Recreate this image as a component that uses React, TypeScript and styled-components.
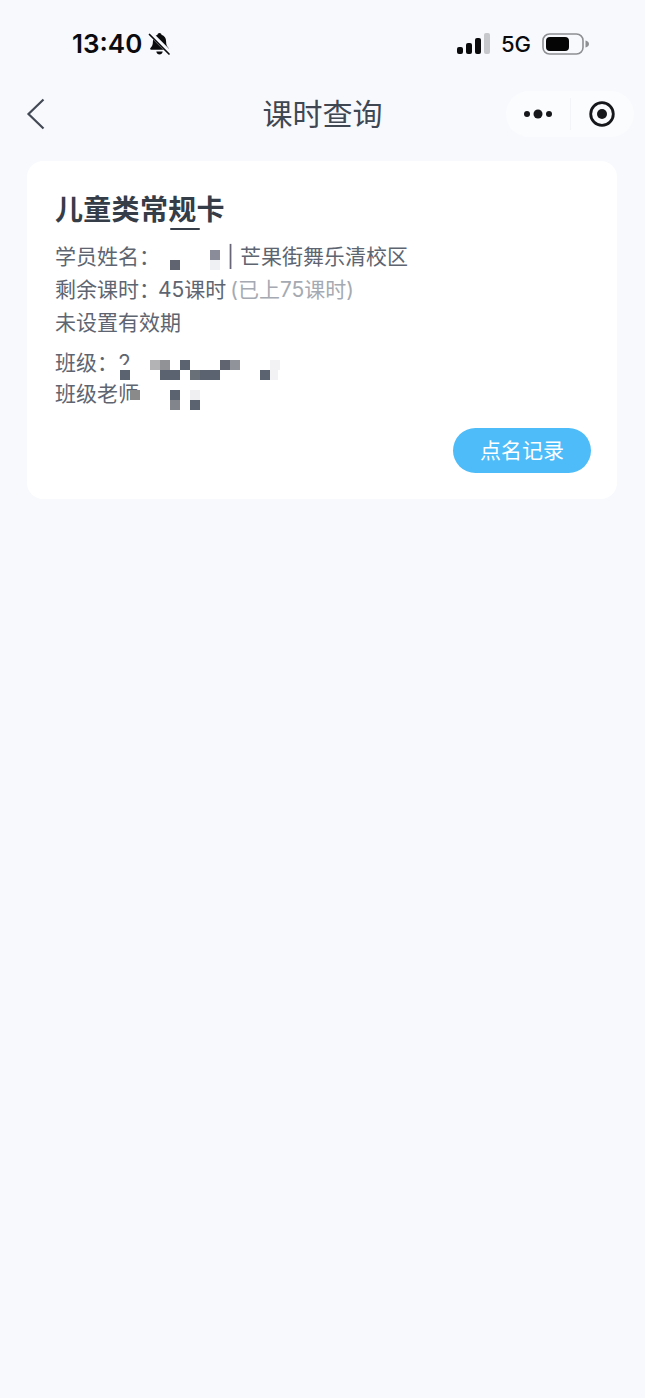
import React from 'react'
import styled, { createGlobalStyle } from 'styled-components'

const GlobalStyle = createGlobalStyle`
  html, body {
    margin: 0;
    padding: 0;
    background: #f7f9fd;
  }
  body {
    font-family: "Inter", "Noto Sans CJK SC", sans-serif;
  }
`

// mosaic squares that cover the private names, [x, y, w, h, colour] relative to the card
const MOSAIC: [number, number, number, number, string][] = [
  [143, 99, 10, 10, '#5f6470'],
  [183, 89, 10, 10, '#8a8d99'],
  [183, 99, 10, 10, '#eff0f3'],
  [123, 199, 10, 10, '#b3b3b5'],
  [133, 199, 10, 10, '#909296'],
  [153, 199, 10, 10, '#5b6270'],
  [193, 199, 10, 10, '#5f6470'],
  [203, 199, 10, 10, '#90949a'],
  [243, 199, 10, 10, '#f2f2f5'],
  [88, 204, 16, 16, '#ffffff'],
  [93, 209, 10, 10, '#5b6270'],
  [133, 209, 20, 10, '#5b6270'],
  [163, 209, 10, 10, '#6a7078'],
  [173, 209, 20, 10, '#5b6270'],
  [233, 209, 10, 10, '#5b6270'],
  [243, 209, 8, 10, '#f2f2f5'],
  [103, 229, 10, 10, '#8a8a8a'],
  [103, 239, 12, 8, '#ffffff'],
  [143, 229, 10, 10, '#5b6270'],
  [163, 229, 10, 10, '#efeff2'],
  [143, 239, 10, 10, '#82868c'],
  [163, 239, 10, 10, '#5b6270'],
]

const Page = styled.div`
  min-height: 1398px;
  background: #f7f9fd;
  overflow: hidden;
`

const StatusBar = styled.div`
  display: flex;
  align-items: center;
  justify-content: space-between;
  height: 88px;
  padding: 0 56px 0 72px;
  color: #0b0b0d;
`

const StatusGroup = styled.div<{ $gap: number }>`
  display: flex;
  align-items: center;
  gap: ${p => p.$gap}px;
`

const Time = styled.span`
  font-size: 26px;
  font-weight: 600;
  line-height: 1;
`

const Network = styled.span`
  font-family: "Inter", sans-serif;
  font-size: 22px;
  font-weight: 500;
  line-height: 1;
`

const NavBar = styled.div`
  display: grid;
  grid-template-columns: minmax(0, 1fr) auto minmax(0, 1fr);
  align-items: center;
  height: 52px;
  padding: 0 11px;
  margin-bottom: 21px;
`

const BackButton = styled.div`
  display: flex;
  align-items: center;
  height: 32px;
  padding-left: 15px;
`

const Title = styled.h1`
  margin: 0;
  font-size: 30px;
  font-weight: 400;
  line-height: 1;
  color: #3f4752;
`

const Capsule = styled.div`
  justify-self: end;
  display: flex;
  align-items: center;
  flex: none;
  width: 128px;
  height: 46px;
  border-radius: 23px;
  background: #fbfcfe;
`

const CapsulePart = styled.div`
  flex: 1;
  display: flex;
  align-items: center;
  justify-content: center;
`

const CapsuleDivider = styled.div`
  width: 1px;
  height: 32px;
  background: #f3f4f7;
`

const Card = styled.section`
  position: relative;
  display: flex;
  flex-direction: column;
  box-sizing: border-box;
  width: 590px;
  height: 338px;
  margin-left: 27px;
  padding: 30px 26px 26px 28px;
  border-radius: 16px;
  background: #ffffff;
`

const CardTitle = styled.h2`
  margin: 0 0 11px;
  font-size: 28px;
  font-weight: 700;
  line-height: 38px;
  letter-spacing: 0.3px;
  color: #353d48;
`

const InfoLine = styled.div`
  font-size: 21px;
  line-height: 33px;
  white-space: nowrap;
  color: #5e6571;
`

const ClassBlock = styled.div`
  margin-top: 8px;

  ${InfoLine} {
    line-height: 31px;
  }
`

const NameGap = styled.span`
  display: inline-block;
  width: 67px;
`

const Count = styled.span`
  margin-left: -2px;
`

const Muted = styled.span`
  margin-left: -2px;
  color: #a5aab2;
`

const RecordButton = styled.button`
  align-self: flex-end;
  margin-top: auto;
  width: 138px;
  height: 45px;
  padding: 0 0 3px;
  border: 0;
  border-radius: 23px;
  background: #4dbcf8;
  color: #ffffff;
  font-family: inherit;
  font-size: 21px;
`

const Pixel = styled.i`
  position: absolute;
  display: block;
`

const TitleMark = styled.i`
  position: absolute;
  left: 143px;
  top: 67px;
  width: 30px;
  height: 2px;
  border-radius: 1px;
  background: #353d48;
`

const BellOff = () => (
  <svg width="23" height="24" viewBox="0 0 23 24">
    <path
      d="M11.500 1c1.100 0 1.900.8 2 1.800 3 .9 4.600 3.400 4.600 6.600 0 3.200.9 5 2.400 6.500.7.700.3 1.800-.7 1.800H3.200c-1 0-1.400-1.100-.7-1.800C4 14.400 4.900 12.600 4.900 9.400c0-3.200 1.600-5.700 4.600-6.600.1-1 .9-1.800 2-1.800z"
      fill="#0b0b0d"
    />
    <path d="M8.300 19.500c.3 1.900 1.600 3 3.200 3s2.900-1.100 3.200-3z" fill="#0b0b0d" />
    <path d="M2.500 1.500 L22 21" stroke="#f7f9fd" strokeWidth="4.600" />
    <path d="M1.500 2.500 L21 22" stroke="#0b0b0d" strokeWidth="1.700" strokeLinecap="round" />
  </svg>
)

const Signal = () => (
  <svg width="33" height="22" viewBox="0 0 33 22">
    <rect x="0" y="14" width="6" height="7" rx="2" fill="#0b0b0d" />
    <rect x="9" y="10" width="6" height="11" rx="2" fill="#0b0b0d" />
    <rect x="18" y="5" width="6" height="16" rx="2" fill="#0b0b0d" />
    <rect x="27" y="0" width="6" height="21" rx="2" fill="#c6c8cb" />
  </svg>
)

const Battery = () => (
  <svg width="47" height="22" viewBox="0 0 47 22">
    <rect x="1" y="1" width="40" height="20" rx="6.500" fill="none" stroke="#8e8f92" strokeWidth="1.600" />
    <rect x="4" y="4" width="23" height="14" rx="4" fill="#050506" />
    <path d="M43.500 7.500c2 .4 3.500 1.700 3.500 3.500s-1.500 3.100-3.500 3.500z" fill="#8e8f92" />
  </svg>
)

const BackIcon = () => (
  <svg width="20" height="32" viewBox="0 0 20 32">
    <path d="M17.500 1.500 L2.500 16 L17.500 30.500" fill="none" stroke="#434a55" strokeWidth="2.200" />
  </svg>
)

const MoreIcon = () => (
  <svg width="30" height="12" viewBox="0 0 30 12">
    <circle cx="4" cy="6" r="3" fill="#15171a" />
    <circle cx="15" cy="6" r="4.500" fill="#15171a" />
    <circle cx="26" cy="6" r="3" fill="#15171a" />
  </svg>
)

const RecordIcon = () => (
  <svg width="26" height="26" viewBox="0 0 26 26">
    <circle cx="13" cy="13" r="11.300" fill="none" stroke="#15171a" strokeWidth="2.800" />
    <circle cx="13" cy="13" r="5" fill="#15171a" />
  </svg>
)

export default function App() {
  return (
    <Page>
      <GlobalStyle />
      <StatusBar>
        <StatusGroup $gap={6}>
          <Time>13:40</Time>
          <BellOff />
        </StatusGroup>
        <StatusGroup $gap={11}>
          <Signal />
          <Network>5G</Network>
          <Battery />
        </StatusGroup>
      </StatusBar>
      <NavBar>
        <BackButton>
          <BackIcon />
        </BackButton>
        <Title>课时查询</Title>
        <Capsule>
          <CapsulePart>
            <MoreIcon />
          </CapsulePart>
          <CapsuleDivider />
          <CapsulePart>
            <RecordIcon />
          </CapsulePart>
        </Capsule>
      </NavBar>
      <Card>
        <CardTitle>儿童类常规卡</CardTitle>
        <InfoLine>
          学员姓名：<NameGap />| 芒果街舞乐清校区
        </InfoLine>
        <InfoLine>
          剩余课时：<Count>45课时</Count> <Muted>(已上75课时)</Muted>
        </InfoLine>
        <InfoLine>未设置有效期</InfoLine>
        <ClassBlock>
          <InfoLine>班级：2</InfoLine>
          <InfoLine>班级老师</InfoLine>
        </ClassBlock>
        <RecordButton>点名记录</RecordButton>
        <TitleMark />
        {MOSAIC.map(([x, y, w, h, c], i) => (
          <Pixel key={i} style={{ left: x, top: y, width: w, height: h, background: c }} />
        ))}
      </Card>
    </Page>
  )
}
